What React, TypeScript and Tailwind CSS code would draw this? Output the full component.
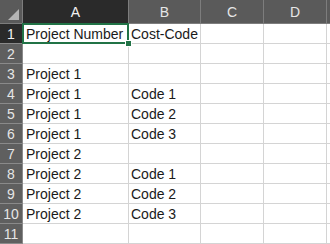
import React from "react";

const rows: [string, string][] = [
  ["Project Number", "Cost-Code"],
  ["", ""],
  ["Project 1", ""],
  ["Project 1", "Code 1"],
  ["Project 1", "Code 2"],
  ["Project 1", "Code 3"],
  ["Project 2", ""],
  ["Project 2", "Code 1"],
  ["Project 2", "Code 2"],
  ["Project 2", "Code 3"],
  ["", ""],
];

const cols = ["A", "B", "C", "D"];

export default function App() {
  return (
    <div
      className="h-[244px] w-[330px] overflow-hidden bg-white text-[14px]"
      style={{ fontFamily: '"Liberation Sans", Arial, sans-serif' }}
    >
      <div className="grid grid-cols-[23px_106px_72px_63px_63px_1fr] grid-rows-[24px_repeat(11,20px)]">
        {/* corner */}
        <div className="relative border-b border-r border-[#7d7d7d] bg-[#5a5a5a]">
          <div className="absolute bottom-[3px] right-[3px] h-0 w-0 border-b-[11px] border-l-[11px] border-b-[#b4b4b4] border-l-transparent" />
        </div>
        {cols.map((c, i) => (
          <div
            key={c}
            className={
              "flex items-center justify-center border-b border-r border-[#7d7d7d] pt-[2px] " +
              (i === 0 ? "bg-[#2a2a2a] text-[#f2f2f2]" : "bg-[#5a5a5a] text-[#e6e6e6]")
            }
          >
            {c}
          </div>
        ))}
        <div className="border-b border-[#7d7d7d] bg-[#5a5a5a]" />

        {rows.map((r, ri) => (
          <React.Fragment key={ri}>
            <div
              className={
                "flex items-center justify-center border-b border-r border-[#8a8a8a] pt-[1px] " +
                (ri === 0 ? "bg-[#2a2a2a] text-[#f2f2f2]" : "bg-[#5f5f5f] text-[#e6e6e6]")
              }
            >
              {ri + 1}
            </div>
            <div className="relative flex items-center whitespace-nowrap border-b border-r border-[#d4d4d4] pl-[3px] pt-[2px] text-[#1a1a1a]">
              {r[0]}
              {ri === 0 && (
                <>
                  <div className="pointer-events-none absolute -left-[1px] -top-[1px] bottom-[-1px] right-[-1px] z-10 border-2 border-[#217346]" />
                  <div className="absolute -bottom-[4px] -right-[4px] z-20 h-[7px] w-[7px] border border-white bg-[#217346]" />
                </>
              )}
            </div>
            <div className="flex items-center whitespace-nowrap border-b border-r border-[#d4d4d4] pl-[2px] pt-[2px] text-[#1a1a1a]">
              {r[1]}
            </div>
            <div className="border-b border-r border-[#d4d4d4]" />
            <div className="border-b border-r border-[#d4d4d4]" />
            <div className="border-b border-[#d4d4d4]" />
          </React.Fragment>
        ))}
      </div>
    </div>
  );
}
